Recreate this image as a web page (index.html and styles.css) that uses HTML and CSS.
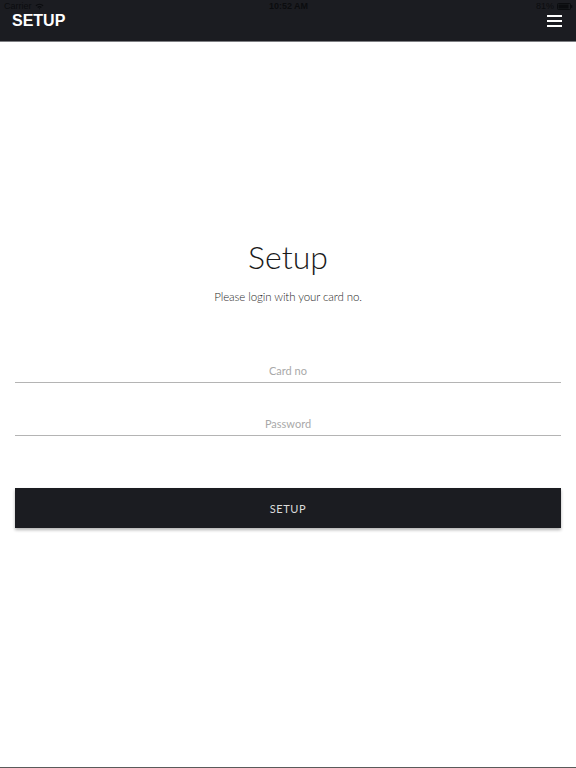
FILE: index.html
```html
<!DOCTYPE html>
<html>
<head>
<meta charset="utf-8">
<link rel="stylesheet" href="styles.css">
</head>
<body>
<div class="page">
  <header class="topbar">
    <div class="status">
      <span class="carrier">Carrier
        <svg class="wifi" width="9" height="7" viewBox="0 0 9 7"><path d="M0.5 2.3 A6 6 0 0 1 8.5 2.3 L7.6 3.2 A4.7 4.7 0 0 0 1.4 3.2Z M2.2 4 A3.5 3.5 0 0 1 6.8 4 L5.9 4.9 A2.2 2.2 0 0 0 3.1 4.9Z M3.8 5.7 A1 1 0 0 1 5.2 5.7 L4.5 6.6Z" fill="#0b0c0f"/></svg>
      </span>
      <span class="time">10:52 AM</span>
      <span class="battery">81%
        <svg width="16" height="7" viewBox="0 0 16 7"><rect x="0.5" y="0.5" width="13" height="6" rx="1" fill="none" stroke="#0b0c0f"/><rect x="1.5" y="1.5" width="10" height="4" fill="#0b0c0f"/><rect x="14" y="2.2" width="1.3" height="2.6" fill="#0b0c0f"/></svg>
      </span>
    </div>
    <div class="titlerow">
      <span class="title">SETUP</span>
      <svg class="menu" width="15" height="12" viewBox="0 0 15 12"><rect x="0" y="0" width="15" height="2" fill="#fff"/><rect x="0" y="5" width="15" height="2" fill="#fff"/><rect x="0" y="10" width="15" height="2" fill="#fff"/></svg>
    </div>
  </header>
  <main class="content">
    <h1 class="heading">Setup</h1>
    <p class="sub">Please login with your card no.</p>
    <input class="field first" type="text" placeholder="Card no">
    <input class="field second" type="password" placeholder="Password">
    <button class="btn">SETUP</button>
  </main>
  <div class="bottomline"></div>
</div>
</body>
</html>
```
FILE: styles.css
```css
html, body {
  margin: 0;
  padding: 0;
  background: #fff;
}
body {
  font-family: Lato, "Open Sans", "Liberation Sans", sans-serif;
}
.page {
  height: 768px;
  display: flex;
  flex-direction: column;
}
.topbar {
  background: #1b1c21;
  height: 41px;
  border-bottom: 1px solid #7d7e82;
  display: flex;
  flex-direction: column;
}
.status {
  box-sizing: border-box;
  height: 12px;
  padding: 1px 3px 0 4px;
  display: flex;
  justify-content: space-between;
  align-items: flex-start;
  font-family: "Liberation Sans", sans-serif;
  font-size: 9px;
  line-height: 10px;
  color: #0b0c0f;
}
.carrier, .battery {
  display: flex;
  align-items: center;
  gap: 3px;
  width: 60px;
  height: 10px;
}
.battery {
  justify-content: flex-end;
}
.time {
  font-weight: bold;
}
.titlerow {
  flex: 1;
  display: flex;
  align-items: flex-start;
  justify-content: space-between;
  padding: 0 14px 0 12px;
}
.title {
  color: #fff;
  font-family: "Liberation Sans", Arial, sans-serif;
  font-weight: 700;
  font-size: 16px;
  line-height: 18px;
}
.menu {
  margin-top: 3px;
}
.content {
  display: flex;
  flex-direction: column;
  align-items: stretch;
  padding: 195px 15px 0 15px;
}
.heading {
  margin: 0;
  text-align: center;
  font-weight: 300;
  font-size: 32px;
  line-height: 40px;
  color: #1a1a1a;
}
.sub {
  margin: 12px 0 0 0;
  text-align: center;
  font-size: 11.5px;
  line-height: 16px;
  font-weight: 300;
  color: #1f1f1f;
  letter-spacing: -0.1px;
}
.field {
  display: block;
  box-sizing: border-box;
  width: 100%;
  height: 25px;
  border: none;
  border-bottom: 1px solid #b4b4b4;
  background: transparent;
  outline: none;
  text-align: center;
  font-family: Lato, "Open Sans", sans-serif;
  font-size: 11px;
  font-weight: 400;
  padding: 0;
  color: #333;
}
.field::placeholder {
  color: #a9a9a9;
}
.first {
  margin-top: 53px;
}
.second {
  margin-top: 28px;
}
.btn {
  margin-top: 52px;
  height: 40px;
  border: none;
  background: #1b1c21;
  color: #dcdcdc;
  font-family: Lato, "Open Sans", sans-serif;
  font-size: 11px;
  letter-spacing: 0.6px;
  box-shadow: 0 2px 3px rgba(0,0,0,0.3);
  padding: 0;
}
.bottomline {
  margin-top: auto;
  height: 1px;
  background: #5a5a5a;
}
```
